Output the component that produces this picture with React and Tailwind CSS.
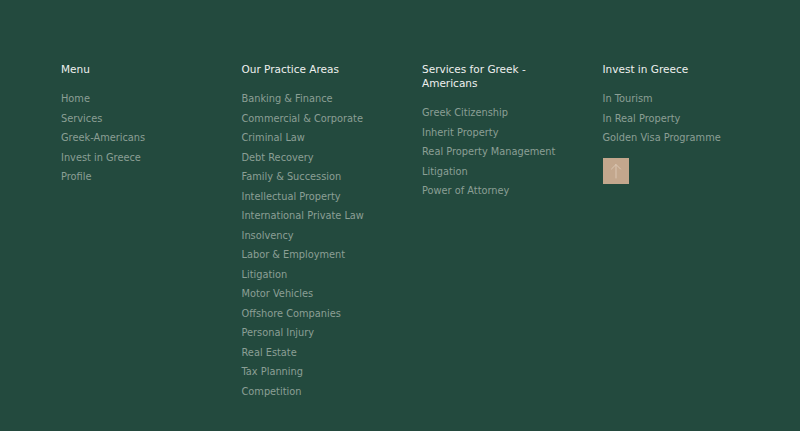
import React from 'react';

const columns = [
  {
    title: 'Menu',
    links: ['Home', 'Services', 'Greek-Americans', 'Invest in Greece', 'Profile'],
  },
  {
    title: 'Our Practice Areas',
    links: [
      'Banking & Finance',
      'Commercial & Corporate',
      'Criminal Law',
      'Debt Recovery',
      'Family & Succession',
      'Intellectual Property',
      'International Private Law',
      'Insolvency',
      'Labor & Employment',
      'Litigation',
      'Motor Vehicles',
      'Offshore Companies',
      'Personal Injury',
      'Real Estate',
      'Tax Planning',
      'Competition',
    ],
  },
  {
    title: 'Services for Greek - Americans',
    links: ['Greek Citizenship', 'Inherit Property', 'Real Property Management', 'Litigation', 'Power of Attorney'],
  },
  {
    title: 'Invest in Greece',
    links: ['In Tourism', 'In Real Property', 'Golden Visa Programme'],
    top: true,
  },
];

const App = () => {
  return (
    <footer
      className="w-full h-[431px] bg-[#234a3e] overflow-hidden"
      style={{ fontFamily: '"DejaVu Sans", Verdana, sans-serif' }}
    >
      <div className="grid grid-cols-4 w-[722px] ml-[61px] pt-[62px]">
        {columns.map((col) => (
          <div key={col.title} className="pr-4">
            <h4 className="max-w-[140px] text-[10.5px] leading-[14px] text-[#eef0ee] font-normal">{col.title}</h4>
            <ul className="mt-[13px]">
              {col.links.map((link) => (
                <li key={link} className="text-[9.8px] leading-[19.5px] text-[#8b9f95]">
                  <a href="#">{link}</a>
                </li>
              ))}
            </ul>
            {col.top && (
              <button className="mt-[10px] w-[26px] h-[26px] bg-[#c3a78d] flex items-center justify-center">
                <svg width="12" height="16" viewBox="0 0 12 16" fill="none" stroke="#dccab7" strokeWidth="0.9" strokeLinecap="round">
                  <path d="M6 15V1.5" />
                  <path d="M1.5 6L6 1.5L10.5 6" />
                </svg>
              </button>
            )}
          </div>
        ))}
      </div>
    </footer>
  );
};

export default App;
